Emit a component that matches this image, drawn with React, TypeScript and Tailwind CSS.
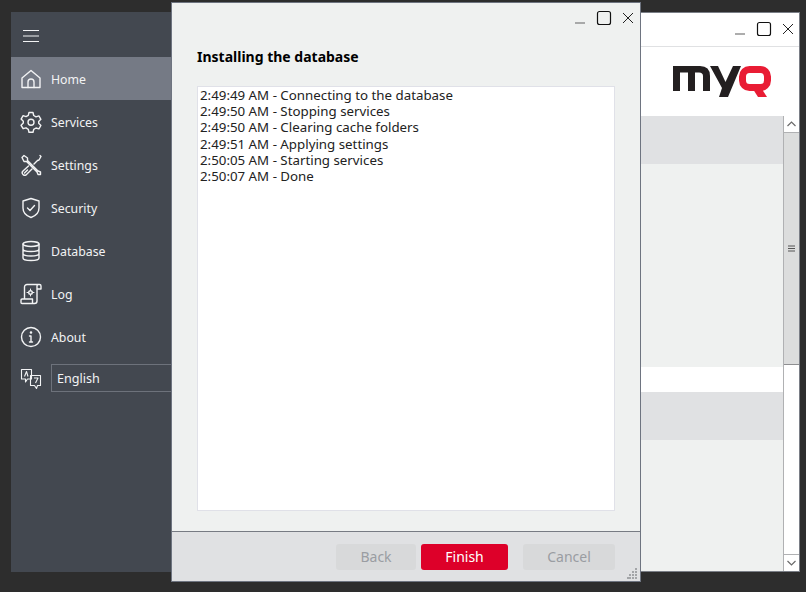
const Row = ({ icon, label, active }: { icon: React.ReactNode; label: string; active?: boolean }) => (
  <div className={`flex h-[43px] items-center pl-[9px] ${active ? "bg-[#757a85]" : ""}`}>
    <div className="flex w-[22px] justify-center pt-[1px]">{icon}</div>
    <span className="ml-[9px] pt-[4px] text-[12.3px] text-[#f2f3f4]">{label}</span>
  </div>
);

const Ic = ({ children }: { children: React.ReactNode }) => (
  <svg width="22" height="22" viewBox="0 0 22 22" fill="none" stroke="#f2f3f4" strokeWidth="1.4" strokeLinejoin="round" strokeLinecap="round">
    {children}
  </svg>
);

const WinBtns = () => (
  <svg width="70" height="20" viewBox="0 0 70 20" fill="none">
    <path d="M11 15h10" stroke="#8a8a8a" strokeWidth="1.4" />
    <rect x="33.5" y="3.5" width="13" height="13" rx="2" stroke="#111" strokeWidth="1.200" />
    <path d="M59 5l10 10M69 5l-10 10" stroke="#222" strokeWidth="1" />
  </svg>
);

const Btn = ({ children, w, primary }: { children: string; w: string; primary?: boolean }) => (
  <div className={`flex h-[26px] items-center justify-center rounded-[3px] text-[14px] ${w} ${primary ? "bg-[#dd0029] text-white" : "bg-[#d8d9da] text-[#9a9da2]"}`}>
    {children}
  </div>
);

const lines = [
  "2:49:49 AM - Connecting to the database",
  "2:49:50 AM - Stopping services",
  "2:49:50 AM - Clearing cache folders",
  "2:49:51 AM - Applying settings",
  "2:50:05 AM - Starting services",
  "2:50:07 AM - Done",
];

export default function App() {
  return (
    <div className="relative h-[592px] w-[806px] overflow-hidden bg-[#2d2d2d] font-['Noto_Sans',sans-serif]">
      <div className="absolute left-[11px] top-[12px] flex h-[560px] w-[789px]">
        <div className="w-[160px] bg-[#434850]">
          <div className="flex h-[45px] items-center pl-[12px] pt-[2px]">
            <svg width="16" height="12" viewBox="0 0 16 12" stroke="#f2f3f4" strokeWidth="1"><path d="M0 .5h16M0 6h16M0 11.500h16" /></svg>
          </div>
          <Row active label="Home" icon={<Ic><path d="M2 19.500V10L11 2.500 20 10v9.500z" /><path d="M8 19.500V14a3 3 0 0 1 6 0v5.500" /></Ic>} />
          <Row label="Services" icon={<Ic><path d="M9 1.500h4l.7 3 2.300 1.300 2.900-.9 2 3.400-2.200 2.200v1.800l2.200 2.200-2 3.400-2.900-.9-2.300 1.300-.7 3H9l-.7-3L6 16.800l-2.900.9-2-3.400L3.300 12.100v-1.800L1.100 8.100l2-3.400 2.900.9 2.300-1.300z" /><circle cx="11" cy="11.200" r="3" /></Ic>} />
          <Row label="Settings" icon={<Ic><path d="M2 3.500l2-2 3.500 2.500v2.500L18 17l2.500 1v2.500h-2.500l-1-2.500L6.500 7.500H4z" /><path d="M20 1.500l1 1-2 3.500-1.500.5-3.500 3.500M8.500 12l-5.500 5a2.400 2.400 0 0 0 3.500 3.500l5.500-5.500M4.500 19l3-3" /></Ic>} />
          <Row label="Security" icon={<Ic><path d="M11 1.500l8 2.500v7c0 5-3.500 8-8 9.500-4.500-1.500-8-4.500-8-9.500V4z" /><path d="M7.500 11l2.500 2.500 4.500-5" /></Ic>} />
          <Row label="Database" icon={<Ic><ellipse cx="11" cy="4" rx="8" ry="2.500" /><path d="M3 4v14c0 1.500 3.600 2.500 8 2.500s8-1 8-2.500V4M3 9c0 1.500 3.600 2.500 8 2.500s8-1 8-2.500M3 13.500c0 1.500 3.600 2.500 8 2.500s8-1 8-2.500" /></Ic>} />
          <Row label="Log" icon={<Ic><path d="M4.500 16V4a2.500 2.500 0 0 1 2.500-2.500h12.500a1.500 1.500 0 0 1 1.500 1.500v3h-4V3a1.500 1.500 0 0 1 1.500-1.500M17 6v12a2.500 2.500 0 0 1-2.500 2.500H2a1 1 0 0 1-1-1V17a1 1 0 0 1 1-1h10.500v4.500" /><circle cx="10.500" cy="9.500" r="1.800" /><path d="M10.500 6v1.200M10.500 11.800V13M7 9.500h1.200M12.800 9.500H14" strokeWidth="1" /></Ic>} />
          <Row label="About" icon={<Ic><circle cx="11" cy="11" r="9.500" /><path d="M11 10v6M9.500 10H11M9.500 16h3" /><circle cx="11" cy="6.500" r=".6" /></Ic>} />
          <div className="mt-[6px] flex h-[28px] items-center pl-[9px]">
            <div className="flex w-[22px] justify-center">
              <svg width="22" height="22" viewBox="0 0 22 22" fill="none" stroke="#f2f3f4" strokeWidth="1.100" strokeLinejoin="round">
                <path d="M1.500 2.500h10v9.500H7.500L5.500 15V12h-4z" />
                <path d="M10.500 8.500h10v10H17.500l-1 3-2-3h-4z" />
                <path d="M4.500 9.500l2-5 1.500 5M14 11h4l-2.500 5" />
              </svg>
            </div>
            <div className="ml-[9px] flex h-[28px] flex-1 items-center border border-r-0 border-[#6d727b] pl-[5px] pt-[3px] text-[12.6px] text-[#f2f3f4]">English</div>
          </div>
        </div>

        <div className="flex flex-1 flex-col border border-l-0 border-[#7a7e86] bg-[#eff1f0]">
          <div className="flex h-[34px] shrink-0 items-center justify-end border-b border-[#e0e1e3] bg-white pb-[1px] pr-[5px]"><WinBtns /></div>
          <div className="flex h-[69px] shrink-0 items-start justify-end bg-white pr-[26px] pt-[19px]">
            <svg width="100" height="32" viewBox="0 0 100 32">
              <path fill="#231f20" d="M0 25V0h27q10 0 10 10v15h-7V10q0-3.500-4-3.500h-4V25h-7V6.500H7V25z" />
              <path fill="#231f20" d="M37 0h8l7.500 16L60 0h8L55 31h-9l3-9z" />
              <rect x="69.500" y="3.500" width="25" height="18" rx="7" fill="none" stroke="#e91c34" strokeWidth="7" />
              <path fill="#e91c34" d="M78 20h9l7 11h-9z" />
            </svg>
          </div>
          <div className="flex min-h-0 flex-1">
            <div className="flex flex-1 flex-col">
              <div className="h-[48px] bg-[#e0e1e3]" />
              <div className="h-[203px]" />
              <div className="h-[25px] bg-white" />
              <div className="h-[48px] bg-[#e0e1e3]" />
            </div>
            <div className="flex w-[16px] flex-col border-l border-[#b0b1b3] bg-white">
              <div className="flex h-[17px] items-center justify-center border-b border-[#b0b1b3]">
                <svg width="9" height="6" viewBox="0 0 9 6" fill="none" stroke="#6a6a6a" strokeWidth="1.200"><path d="M.5 5l4-4 4 4" /></svg>
              </div>
              <div className="flex h-[232px] items-center justify-center border-b border-[#8e8f91] bg-[#dcdddd]">
                <svg width="7" height="7" viewBox="0 0 7 7" stroke="#555"><path d="M0 1h7M0 3.500h7M0 6h7" /></svg>
              </div>
              <div className="flex-1" />
              <div className="flex h-[17px] items-center justify-center border-t border-[#b0b1b3]">
                <svg width="9" height="6" viewBox="0 0 9 6" fill="none" stroke="#6a6a6a" strokeWidth="1.200"><path d="M.5 1l4 4 4-4" /></svg>
              </div>
            </div>
          </div>
        </div>
      </div>

      <div className="absolute left-[171px] top-[2px] flex h-[580px] w-[470px] flex-col border border-[#6e7480] bg-[#eff1f0]">
        <div className="flex h-[30px] shrink-0 items-center justify-end pr-[6px]"><WinBtns /></div>
        <div className="ml-[25px] mt-[14px] text-[14px] font-bold leading-[20px] text-black">Installing the database</div>
        <div className="mx-[25px] mt-[19px] h-[425px] border border-[#e0e1e8] bg-white pl-[2px] text-[13.3px] leading-[16.200px] text-[#222]">
          {lines.map((l) => <div key={l}>{l}</div>)}
        </div>
        <div className="relative mt-[20px] flex flex-1 items-center border-t border-[#777b83] bg-[#e0e1e3] pl-[164px]">
          <Btn w="w-[80px]">Back</Btn>
          <div className="ml-[5px]"><Btn w="w-[87px]" primary>Finish</Btn></div>
          <div className="ml-[15px]"><Btn w="w-[92px]">Cancel</Btn></div>
          <svg className="absolute bottom-[2px] right-[2px]" width="11" height="11" viewBox="0 0 11 11" fill="#a3a5a8">
            <rect x="8" y="0" width="2" height="2" /><rect x="5" y="3" width="2" height="2" /><rect x="8" y="3" width="2" height="2" />
            <rect x="2" y="6" width="2" height="2" /><rect x="5" y="6" width="2" height="2" /><rect x="8" y="6" width="2" height="2" />
            <rect x="0" y="9" width="2" height="2" /><rect x="2" y="9" width="2" height="2" /><rect x="5" y="9" width="2" height="2" /><rect x="8" y="9" width="2" height="2" />
          </svg>
        </div>
      </div>
    </div>
  );
}
